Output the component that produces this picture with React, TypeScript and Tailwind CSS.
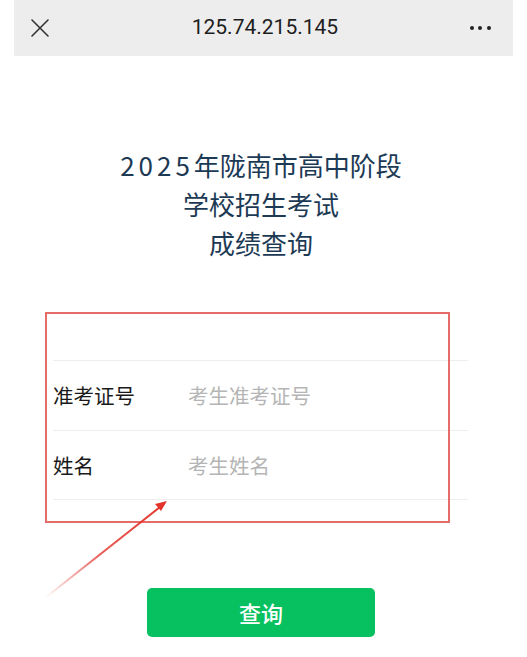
import React from "react";

const cjk = { fontFamily: '"Noto Sans CJK SC", "Noto Sans", sans-serif' };

function TopBar() {
	return (
		<div className="mx-[14px] h-[56px] bg-[#ededed] flex items-center justify-between pl-[16px] pr-[22px]">
			<svg width="20" height="20" viewBox="0 0 20 20" className="text-[#333]">
				<path d="M2 2 L18 18 M18 2 L2 18" stroke="currentColor" strokeWidth="1.6" strokeLinecap="round" />
			</svg>
			<div className="text-[21px] text-[#1e1e1e] pl-[10px]" style={{ fontFamily: "Roboto, sans-serif" }}>
				125.74.215.145
			</div>
			<div className="flex gap-[4.6px] items-center">
				<span className="w-[4px] h-[4px] rounded-full bg-[#222]" />
				<span className="w-[4px] h-[4px] rounded-full bg-[#222]" />
				<span className="w-[4px] h-[4px] rounded-full bg-[#222]" />
			</div>
		</div>
	);
}

function Row({ label, hint, last }: { label: string; hint: string; last?: boolean }) {
	return (
		<div className={"flex items-center h-[70px] border-t border-[#eeeeee]" + (last ? " border-b" : "")}>
			<div className="w-[135px] text-[20.5px] text-[#1a1a1a]">{label}</div>
			<input
				className="flex-1 text-[20.5px] outline-none placeholder:text-[#b5b5b5] bg-transparent"
				placeholder={hint}
				style={cjk}
			/>
		</div>
	);
}

export default function App() {
	return (
		<div className="bg-white min-h-[657px] w-[527px] relative overflow-hidden" style={cjk}>
			<TopBar />

			<div className="mt-[89px] pr-[5px] text-center text-[26px] leading-[39px] text-[#1d3a55]">
				<div>
					<span className="tracking-[4px]">2025</span>年陇南市高中阶段
				</div>
				<div>学校招生考试</div>
				<div>成绩查询</div>
			</div>

			<div className="relative mt-[50px] pl-[53px] pr-[59px] pt-[48px] pb-[24px]">
				<Row label="准考证号" hint="考生准考证号" />
				<Row label="姓名" hint="考生姓名" last />
				<div className="absolute left-[45px] top-0 w-[405px] h-[211px] border-2 border-[#e2524c]/85 pointer-events-none" />
			</div>

			<button className="ml-[147px] mt-[64px] w-[228px] h-[49px] rounded-[5px] bg-[#07c160] text-white text-[22px] font-medium" style={cjk}>
				查询
			</button>

			<svg className="absolute left-0 top-0 pointer-events-none" width="527" height="657">
				<defs>
					<linearGradient id="arr" x1="45" y1="598" x2="167" y2="501" gradientUnits="userSpaceOnUse">
						<stop offset="0" stopColor="#e2342c" stopOpacity="0" />
						<stop offset="0.45" stopColor="#e2342c" stopOpacity="0.8" />
						<stop offset="1" stopColor="#e2342c" />
					</linearGradient>
				</defs>
				<path d="M45 598 L160 507" stroke="url(#arr)" strokeWidth="2" />
				<path d="M167 501 L155 504 L161 511 Z" fill="#e2342c" />
			</svg>
		</div>
	);
}
